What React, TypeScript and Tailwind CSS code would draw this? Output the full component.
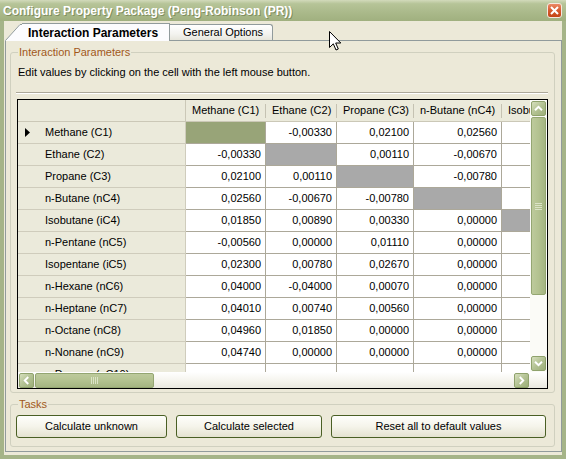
import React from "react";

type Cell = string | null; // null = diagonal (grey), "sel" = current cell

const columns = ["Methane (C1)", "Ethane (C2)", "Propane (C3)", "n-Butane (nC4)", "Isobutane (iC4)"];

const rows: [string, Cell[]][] = [
  ["Methane (C1)", ["sel", "-0,00330", "0,02100", "0,02560", ""]],
  ["Ethane (C2)", ["-0,00330", null, "0,00110", "-0,00670", ""]],
  ["Propane (C3)", ["0,02100", "0,00110", null, "-0,00780", ""]],
  ["n-Butane (nC4)", ["0,02560", "-0,00670", "-0,00780", null, ""]],
  ["Isobutane (iC4)", ["0,01850", "0,00890", "0,00330", "0,00000", null]],
  ["n-Pentane (nC5)", ["-0,00560", "0,00000", "0,01110", "0,00000", ""]],
  ["Isopentane (iC5)", ["0,02300", "0,00780", "0,02670", "0,00000", ""]],
  ["n-Hexane (nC6)", ["0,04000", "-0,04000", "0,00070", "0,00000", ""]],
  ["n-Heptane (nC7)", ["0,04010", "0,00740", "0,00560", "0,00000", ""]],
  ["n-Octane (nC8)", ["0,04960", "0,01850", "0,00000", "0,00000", ""]],
  ["n-Nonane (nC9)", ["0,04740", "0,00000", "0,00000", "0,00000", ""]],
  ["n-Decane (nC10)", ["", "", "", "", ""]],
];

function Chevron({ dir }: { dir: "up" | "down" | "left" | "right" }) {
  const d = {
    up: "M3.5 9.5 L7.5 5.5 L11.5 9.5",
    down: "M3.5 5.5 L7.5 9.5 L11.5 5.5",
    left: "M9.5 3.5 L5.5 7.5 L9.5 11.5",
    right: "M5.5 3.5 L9.5 7.5 L5.5 11.5",
  }[dir];
  return (
    <svg width="15" height="15" viewBox="0 0 15 15">
      <path d={d} fill="none" stroke="#ffffff" strokeWidth="2.2" />
    </svg>
  );
}

function ScrollBtn({ dir }: { dir: "up" | "down" | "left" | "right" }) {
  return (
    <div className="w-[15px] h-[15px] shrink-0 rounded-[2px] border border-[#8fa26c] bg-[linear-gradient(135deg,#d6dfbd_0%,#b3c293_50%,#9cae78_100%)] flex items-center justify-center">
      <Chevron dir={dir} />
    </div>
  );
}

function CloseButton() {
  return (
    <div className="w-[15px] h-[15px] rounded-[3px] border border-[#f4e8e0] bg-[linear-gradient(to_bottom,#eb8a66_0%,#d65a2e_50%,#c34415_100%)] flex items-center justify-center">
      <svg width="11" height="11" viewBox="0 0 11 11">
        <path d="M2 2 L9 9 M9 2 L2 9" stroke="#ffffff" strokeWidth="2" />
      </svg>
    </div>
  );
}

function Cursor() {
  return (
    <svg className="absolute left-[329px] top-[31px]" width="13" height="21" viewBox="0 0 13 21">
      <path
        d="M0.5 0.5 L0.5 16.5 L4.3 12.8 L7 19 L9.3 18 L6.7 12 L11.8 12 Z"
        fill="#ffffff"
        stroke="#000000"
        strokeWidth="1"
        strokeLinejoin="miter"
      />
    </svg>
  );
}

function DataCell({ v }: { v: Cell }) {
  if (v === "sel") return <div className="h-[22px] bg-[#98a478] border-r border-b border-[#aca899]" />;
  if (v === null) return <div className="h-[22px] bg-[#a9a9a9] border-r border-b border-[#aca899]" />;
  return (
    <div className="h-[22px] bg-white border-r border-b border-[#aca899] flex items-center justify-end pr-[4px]">
      {v}
    </div>
  );
}

function Grid() {
  return (
    <div className="ml-[1px] mt-[6px] w-[531px] h-[290px] border border-black flex flex-col bg-white">
      <div className="flex h-[272px]">
        <div className="w-[512px] h-[272px] overflow-hidden">
          <div className="grid grid-cols-[168px_80px_71px_77px_88px_90px] w-max">
            <div className="h-[22px] bg-[#ebeadb] border-b border-r border-[#cbc8b7]" />
            {columns.map((c) => (
              <div
                key={c}
                className="h-[22px] bg-[#ebeadb] border-b border-[#cbc8b7] flex items-center justify-between whitespace-nowrap"
              >
                <span className="pl-[6px]">{c}</span>
                <span className="w-px h-[14px] bg-[#c5c2b2] shadow-[1px_0_0_#ffffff]" />
              </div>
            ))}
            {rows.map(([name, vals], i) => (
              <React.Fragment key={name}>
                <div className="h-[22px] bg-[#ebeadb] border-b border-r border-[#cfccbc] flex items-center whitespace-nowrap">
                  <span className="w-[27px] pl-[7px] flex items-center">
                    {i === 0 && (
                      <svg width="5" height="9" viewBox="0 0 5 9">
                        <path d="M0 0 L5 4.5 L0 9 Z" fill="#000000" />
                      </svg>
                    )}
                  </span>
                  <span>{name}</span>
                </div>
                {vals.map((v, j) => (
                  <DataCell key={j} v={v} />
                ))}
              </React.Fragment>
            ))}
          </div>
        </div>
        {/* vertical scrollbar */}
        <div className="w-[17px] h-[272px] bg-[#fbfbf7] flex flex-col items-center pt-[1px] pb-[1px]">
          <ScrollBtn dir="up" />
          <div className="w-[15px] h-[178px] mt-[1px] rounded-[2px] border border-[#94a672] bg-[linear-gradient(to_right,#bdca9c_0%,#b3c290_50%,#a5b582_100%)] flex items-center justify-center">
            <div className="flex flex-col gap-[1px]">
              <span className="w-[7px] h-px bg-[#dbe3c7]" />
              <span className="w-[7px] h-px bg-[#dbe3c7]" />
              <span className="w-[7px] h-px bg-[#dbe3c7]" />
              <span className="w-[7px] h-px bg-[#dbe3c7]" />
            </div>
          </div>
          <div className="flex-1" />
          <ScrollBtn dir="down" />
        </div>
      </div>
      {/* horizontal scrollbar */}
      <div className="h-[16px] flex items-center bg-[linear-gradient(to_bottom,#ffffff_0%,#f4f3ec_60%,#e9e8df_100%)]">
        <div className="w-[512px] flex items-center px-[1px]">
          <ScrollBtn dir="left" />
          <div className="w-[119px] h-[15px] ml-[1px] rounded-[2px] border border-[#94a672] bg-[linear-gradient(to_bottom,#bdca9c_0%,#b3c290_50%,#a5b582_100%)] flex items-center justify-center">
            <div className="flex gap-[1px]">
              <span className="w-px h-[7px] bg-[#dbe3c7]" />
              <span className="w-px h-[7px] bg-[#dbe3c7]" />
              <span className="w-px h-[7px] bg-[#dbe3c7]" />
              <span className="w-px h-[7px] bg-[#dbe3c7]" />
            </div>
          </div>
          <div className="flex-1" />
          <ScrollBtn dir="right" />
        </div>
      </div>
    </div>
  );
}

function TaskButton({ label, w }: { label: string; w: string }) {
  return (
    <button
      className={`${w} h-[23px] rounded-[3px] border border-[#4a5f24] bg-[linear-gradient(to_bottom,#fefefb_0%,#f5f4ea_50%,#e4e2d0_100%)] text-[11px] text-black`}
    >
      {label}
    </button>
  );
}

export default function App() {
  return (
    <div className="relative w-[566px] h-[459px] overflow-hidden flex flex-col bg-[#a5b488] font-['Liberation_Sans',Arial,sans-serif] text-[11px] text-black">
      {/* title bar */}
      <div className="h-[21px] shrink-0 flex items-center justify-between pl-[3px] pr-[4px] bg-[linear-gradient(to_bottom,#d2dabb_0%,#b6c498_18%,#aab98a_60%,#a0b07f_100%)]">
        <span className="text-[12px] font-bold text-white [text-shadow:1px_1px_0_#7f8e5f]">
          Configure Property Package (Peng-Robinson (PR))
        </span>
        <CloseButton />
      </div>

      {/* client area */}
      <div className="flex-1 mx-[4px] mb-[4px] bg-[#ece9d8] flex flex-col">
        {/* tabs */}
        <div className="h-[19px] shrink-0 flex items-end pl-[1px]">
          <div className="relative z-10 -mb-px flex items-stretch h-[18px]">
            <svg width="17" height="18" viewBox="0 0 17 18" className="shrink-0">
              <path d="M0 18 L15 1 L17 1 L17 18 Z" fill="#fcfcfe" />
              <path d="M0.5 17.5 L15 1.5 L17 1.5" fill="none" stroke="#919b9c" />
            </svg>
            <div className="w-[148px] bg-[#fcfcfe] border-t border-r border-[#919b9c] flex items-center pl-[6px] text-[12px] font-bold">
              Interaction Parameters
            </div>
          </div>
          <div className="w-[103px] h-[16px] mb-0 bg-[linear-gradient(to_bottom,#ffffff_0%,#f3f3ef_60%,#e7e6dc_100%)] border-t border-r border-[#919b9c] rounded-tr-[3px] flex items-center pl-[13px]">
            General Options
          </div>
        </div>

        {/* tab page */}
        <div className="flex-1 ml-[1px] mb-[3px] border border-[#919b9c] bg-[#ece9d8] flex flex-col">
          <fieldset className="ml-[4px] mr-[6px] mt-[4px] border border-[#d0d0bf] rounded-[3px] pl-[5px] pr-[6px] pt-[6px] pb-[3px]">
            <legend className="ml-[2px] px-[1px] leading-[14px] text-[#a1581a]">Interaction Parameters</legend>
            <div className="pl-[2px] leading-[14px]">Edit values by clicking on the cell with the left mouse button.</div>
            <div className="mt-[13px] h-px bg-[#aca899] shadow-[0_1px_0_#ffffff]" />
            <Grid />
          </fieldset>

          <fieldset className="ml-[4px] mr-[6px] mt-[4px] border border-[#d0d0bf] rounded-[3px] pl-[5px] pr-[6px] pt-[4px] pb-[8px]">
            <legend className="ml-[2px] px-[1px] leading-[14px] text-[#a1581a]">Tasks</legend>
            <div className="flex gap-[9px]">
              <TaskButton label="Calculate unknown" w="w-[151px]" />
              <TaskButton label="Calculate selected" w="w-[146px]" />
              <TaskButton label="Reset all to default values" w="w-[215px]" />
            </div>
          </fieldset>
        </div>
      </div>

      <Cursor />
    </div>
  );
}
